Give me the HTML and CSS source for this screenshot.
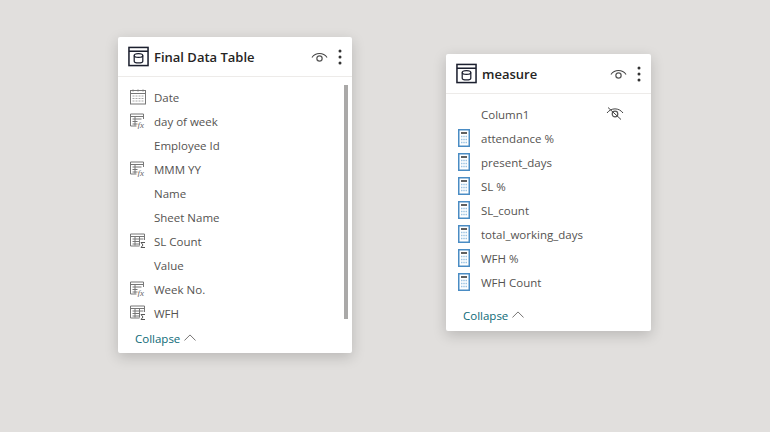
FILE: index.html
```html
<!DOCTYPE html>
<html lang="en">
<head>
    <meta charset="UTF-8">
    <meta name="viewport" content="width=device-width, initial-scale=1.0">
    <title>Model view</title>
    <link rel="stylesheet" href="styles.css">
</head>
<body>
    <svg class="defs" width="0" height="0">
        <defs>
            <symbol id="table" viewBox="0 0 22 22">
                <rect x="1" y="1.5" width="20" height="19" fill="none" stroke="#1b1f2e" stroke-width="1.6"/>
                <path d="M1 5.5h20" stroke="#1b1f2e" stroke-width="1.6"/>
                <ellipse cx="11" cy="10" rx="4.5" ry="2" fill="none" stroke="#1b1f2e" stroke-width="1.3"/>
                <path d="M6.5 10v6c0 2.3 9 2.3 9 0v-6" fill="none" stroke="#1b1f2e" stroke-width="1.3"/>
            </symbol>
            <symbol id="eye" viewBox="0 0 18 12">
                <path d="M1 6.5C5 1 13 1 17 6.5" fill="none" stroke="#444" stroke-width="1.1"/>
                <circle cx="9" cy="7.5" r="2.8" fill="none" stroke="#555" stroke-width="1.3"/>
            </symbol>
            <symbol id="eye-off" viewBox="0 0 18 14">
                <path d="M1 7C5 1.5 13 1.5 17 7" fill="none" stroke="#444"/>
                <circle cx="9" cy="8" r="2.8" fill="none" stroke="#555" stroke-width="1.2"/>
                <path d="M2 1.5 15 13.5" stroke="#444"/>
            </symbol>
            <symbol id="dots" viewBox="0 0 4 16">
                <circle cx="2" cy="2" r="1.5" fill="#333"/>
                <circle cx="2" cy="8" r="1.5" fill="#333"/>
                <circle cx="2" cy="14" r="1.5" fill="#333"/>
            </symbol>
            <symbol id="calendar" viewBox="0 0 16 16">
                <rect x=".5" y="1.5" width="15" height="13.5" fill="#fff" stroke="#777"/>
                <path d="M.5 4.5h15" stroke="#777"/>
                <path d="M3 .5v2M8 .5v2M13 .5v2" stroke="#777"/>
                <path d="M2.5 7h11M2.5 9.5h11M2.5 12h11" stroke="#a8a8a8" stroke-dasharray="2 1"/>
            </symbol>
            <symbol id="calc-col" viewBox="0 0 16 16">
                <path d="M.5 1h13M.5 3.5h13M.5 1v12h6M13.5 1v5" fill="none" stroke="#777"/>
                <path d="M2.5 6h9M2.5 8.5h5M2.5 11h5M5 3.5v9" fill="none" stroke="#777"/>
                <text x="7.5" y="15" class="fx">fx</text>
            </symbol>
            <symbol id="sum-col" viewBox="0 0 16 16">
                <path d="M.5 1h14M.5 3.5h14M.5 1v12h9M14.5 1v6" fill="none" stroke="#777"/>
                <path d="M2.5 6h11M2.5 8.5h7M2.5 11h7M5 3.5v9M9.5 3.5v9" fill="none" stroke="#777"/>
                <path d="M15 9.5h-4l2 2.5-2 2.5h4" fill="none" stroke="#555"/>
            </symbol>
            <symbol id="measure" viewBox="0 0 12 18">
                <rect x=".75" y=".75" width="10.5" height="16.5" fill="#fff" stroke="#4a8cc4" stroke-width="1.5"/>
                <path d="M3 4h6" stroke="#606060" stroke-width="2"/>
                <path d="M3 7.5h6M3 10.5h6M3 13.5h6" stroke="#9cc3e2" stroke-width="1.5" stroke-dasharray="1.5 .75"/>
            </symbol>
        </defs>
    </svg>

    <!-- Model canvas -->
    <section class="card card-final">
        <header class="card-head">
            <svg class="table-icon"><use href="#table"/></svg>
            <span class="card-title">Final Data Table</span>
            <svg class="eye"><use href="#eye"/></svg>
            <svg class="dots"><use href="#dots"/></svg>
        </header>
        <div class="fields">
            <ul class="field-list">
                <li><svg class="ficon"><use href="#calendar"/></svg>Date</li>
                <li><svg class="ficon"><use href="#calc-col"/></svg>day of week</li>
                <li><span class="ficon"></span>Employee Id</li>
                <li><svg class="ficon"><use href="#calc-col"/></svg>MMM YY</li>
                <li><span class="ficon"></span>Name</li>
                <li><span class="ficon"></span>Sheet Name</li>
                <li><svg class="ficon"><use href="#sum-col"/></svg>SL Count</li>
                <li><span class="ficon"></span>Value</li>
                <li><svg class="ficon"><use href="#calc-col"/></svg>Week No.</li>
                <li><svg class="ficon"><use href="#sum-col"/></svg>WFH</li>
            </ul>
            <div class="scrollbar"></div>
        </div>
        <div class="collapse">Collapse <svg class="chevron" viewBox="0 0 14 8"><path d="M.5 7.5 7 1l6.5 6.5"/></svg></div>
    </section>

    <section class="card card-measure">
        <header class="card-head">
            <svg class="table-icon"><use href="#table"/></svg>
            <span class="card-title">measure</span>
            <svg class="eye"><use href="#eye"/></svg>
            <svg class="dots"><use href="#dots"/></svg>
        </header>
        <div class="fields">
            <ul class="field-list">
                <li><span class="micon"></span>Column1<svg class="eye-off"><use href="#eye-off"/></svg></li>
                <li><svg class="micon"><use href="#measure"/></svg>attendance %</li>
                <li><svg class="micon"><use href="#measure"/></svg>present_days</li>
                <li><svg class="micon"><use href="#measure"/></svg>SL %</li>
                <li><svg class="micon"><use href="#measure"/></svg>SL_count</li>
                <li><svg class="micon"><use href="#measure"/></svg>total_working_days</li>
                <li><svg class="micon"><use href="#measure"/></svg>WFH %</li>
                <li><svg class="micon"><use href="#measure"/></svg>WFH Count</li>
            </ul>
        </div>
        <div class="collapse">Collapse <svg class="chevron" viewBox="0 0 14 8"><path d="M.5 7.5 7 1l6.5 6.5"/></svg></div>
    </section>
</body>
</html>
```

FILE: styles.css
```css
html, body {
    height: 100%;
}

body {
    font-family: "Open Sans", "Noto Sans", Arial, sans-serif;
    background-color: #e1dfdd;
    margin: 0;
    overflow: hidden;
    position: relative;
}

.defs {
    position: absolute;
}

.fx {
    font-family: "Liberation Serif", serif;
    font-style: italic;
    font-size: 9px;
    fill: #666;
}

.card {
    position: absolute;
    box-sizing: border-box;
    background: #fff;
    border-radius: 2px;
    box-shadow: 0 4px 14px rgba(0, 0, 0, 0.18);
    display: flex;
    flex-direction: column;
}

.card-final {
    left: 118px;
    top: 37px;
    width: 234px;
    height: 316px;
}

.card-measure {
    left: 446px;
    top: 54px;
    width: 205px;
    height: 277px;
}

.card-head {
    display: flex;
    align-items: center;
    height: 39px;
    padding: 0 10px;
    border-bottom: 1px solid #edebe9;
    flex: none;
}

.table-icon {
    width: 21px;
    height: 21px;
    margin-right: 5px;
}

.card-title {
    flex: 1;
    font-size: 13px;
    font-weight: 600;
    color: #252423;
}

.eye {
    width: 17px;
    height: 12px;
    margin-right: 10px;
}

.dots {
    width: 4px;
    height: 16px;
}

.fields {
    position: relative;
    padding-top: 8px;
    flex: 1;
}

.field-list {
    list-style: none;
    margin: 0;
    padding: 0 0 0 12px;
}

.field-list li {
    display: flex;
    align-items: center;
    height: 24px;
    font-size: 11.5px;
    color: #555351;
}

.ficon {
    width: 16px;
    height: 16px;
    margin-right: 8px;
    flex: none;
}

.micon {
    width: 12px;
    height: 18px;
    margin-right: 11px;
    flex: none;
}

.eye-off {
    width: 18px;
    height: 14px;
    margin-left: 77px;
    margin-top: -2px;
}

.scrollbar {
    position: absolute;
    right: 4px;
    top: 8px;
    width: 4px;
    height: 234px;
    background: #aaa9a8;
}

.collapse {
    display: flex;
    align-items: center;
    gap: 4px;
    height: 24px;
    margin-bottom: 3px;
    padding-left: 17px;
    font-size: 11.5px;
    color: #0d6a77;
    flex: none;
}

.card-measure .collapse {
    margin-bottom: 4px;
}

.chevron {
    width: 12px;
    height: 7px;
    margin-top: -2px;
    fill: none;
    stroke: #605e5c;
}
```
